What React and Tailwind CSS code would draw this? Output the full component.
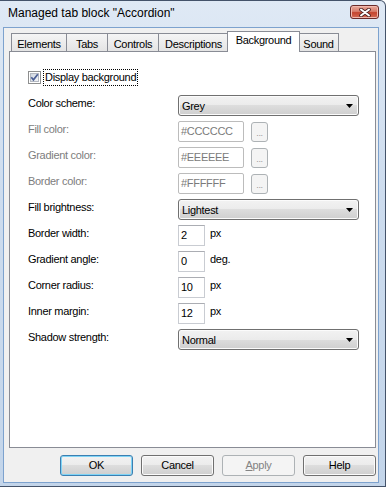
import React from "react";

const BTN_BG =
  "bg-[linear-gradient(#f2f2f2_0%,#ebebeb_50%,#dddddd_50%,#cfcfcf_100%)]";

function Combo({ value }) {
  return (
    <div className="flex h-[21px] w-[181px] items-center rounded-[3px] border border-[#707070] bg-[linear-gradient(#f2f2f2_0%,#ebebeb_50%,#dddddd_50%,#cfcfcf_100%)] pl-[3px] shadow-[inset_0_0_0_1px_#fbfbfb]">
      <span className="flex-1 pt-[1px] leading-[13px]">{value}</span>
      <svg width="7" height="4" className="mr-[5px]">
        <path d="M0 0h7L3.5 4z" fill="#000" />
      </svg>
    </div>
  );
}

function Label({ children, disabled }) {
  return (
    <div
      className={
        disabled
          ? "mt-[2px] w-[150px] leading-[13px] text-[#7d7d7d]"
          : "mt-[2px] w-[150px] leading-[13px] text-black"
      }
    >
      {children}
    </div>
  );
}

function ColorRow({ label, value }) {
  return (
    <div className="flex h-[21px] items-start">
      <Label disabled>{label}</Label>
      <div className="flex h-[21px] w-[66px] items-center rounded-[2px] border border-[#bcbcbc] bg-white pl-[2px] leading-[13px] text-[#7a7a7a]">
        {value}
      </div>
      <div className="ml-[7px] mt-[1px] flex h-[20px] w-[17px] items-end justify-center rounded-[3px] border border-[#adb2b5] bg-[#f4f4f4] pb-[3px] text-[9px] leading-[9px] text-[#9a9a9a]">
        ...
      </div>
    </div>
  );
}

function NumRow({ label, value, unit }) {
  return (
    <div className="flex h-[21px] items-start">
      <Label>{label}</Label>
      <div className="flex h-[21px] w-[27px] items-center border border-[#c9ccd2] border-t-[#abadb3] bg-white pl-[2px] leading-[13px] text-black">
        {value}
      </div>
      <div className="ml-[5px] mt-[2px] leading-[13px]">{unit}</div>
    </div>
  );
}

function ComboRow({ label, value }) {
  return (
    <div className="flex h-[21px] items-start">
      <Label>{label}</Label>
      <Combo value={value} />
    </div>
  );
}

export default function App() {
  return (
    <div className="h-[487px] w-[386px] overflow-hidden bg-white font-['Liberation_Sans',Arial,sans-serif] text-[11px] tracking-[-0.3px] text-black">
      <div className="flex h-[487px] w-[386px] flex-col rounded-tr-[6px] border-y border-r border-[#44536a] bg-[linear-gradient(#dfe9f5_0%,#cddcee_40%,#c3d5ea_100%)]">
        {/* Title bar */}
        <div className="flex h-[26px] items-start">
          <div className="flex-1 pl-[8px] pt-[5px] text-[12px] leading-[15px] tracking-normal text-black">
            Managed tab block "Accordion"
          </div>
          <div className="mr-[6px] mt-[4px] flex h-[14px] w-[29px] items-center justify-center rounded-[3px] border border-[#6a2b2a] bg-[linear-gradient(#e9a99b_0%,#d77d6c_45%,#c4452f_55%,#d56a55_100%)] shadow-[inset_0_0_0_1px_#f0b9ae]">
            <svg width="12" height="9" viewBox="0 0 12 9">
              <path
                d="M2 1.5L10 7.5M10 1.5L2 7.5"
                stroke="#4a2020"
                strokeWidth="3.6"
                strokeLinecap="round"
              />
              <path
                d="M2 1.5L10 7.5M10 1.5L2 7.5"
                stroke="#ffffff"
                strokeWidth="2"
                strokeLinecap="round"
              />
            </svg>
          </div>
        </div>

        {/* Client area */}
        <div className="mb-[3px] ml-[3px] mr-[6px] flex flex-1 flex-col border border-[#7da2ce] bg-[#f0f0f0]">
          <div className="flex flex-1 flex-col pt-[3px]">
            {/* Tab strip */}
            <div className="ml-[5px] flex h-[20px] w-[367px] items-end pl-[2px]">
              <div className="flex h-[18px] w-[56px] justify-center border-x border-t border-[#898c95] bg-[linear-gradient(#f5f5f5,#e4e4e4)] pt-[4px] leading-[13px]">
                Elements
              </div>
              <div className="-ml-px flex h-[18px] w-[42px] justify-center border-x border-t border-[#898c95] bg-[linear-gradient(#f5f5f5,#e4e4e4)] pt-[4px] leading-[13px]">
                Tabs
              </div>
              <div className="-ml-px flex h-[18px] w-[52px] justify-center border-x border-t border-[#898c95] bg-[linear-gradient(#f5f5f5,#e4e4e4)] pt-[4px] leading-[13px]">
                Controls
              </div>
              <div className="-ml-px flex h-[18px] w-[71px] justify-center border-x border-t border-[#898c95] bg-[linear-gradient(#f5f5f5,#e4e4e4)] pt-[4px] leading-[13px]">
                Descriptions
              </div>
              <div className="relative z-10 -mb-px -ml-[2px] flex h-[21px] w-[73px] justify-center border-x border-t border-[#898c95] bg-white pt-[2px] leading-[13px]">
                Background
              </div>
              <div className="-ml-[2px] flex h-[18px] w-[41px] justify-center border-x border-t border-[#898c95] bg-[linear-gradient(#f5f5f5,#e4e4e4)] pt-[4px] leading-[13px]">
                Sound
              </div>
            </div>

            {/* Panel */}
            <div className="ml-[5px] flex h-[397px] w-[367px] flex-col border border-[#898c95] bg-white pl-[18px] pt-[17px]">
              <div className="flex h-[17px] items-center">
                <div className="flex h-[13px] w-[13px] items-center justify-center border border-[#8e8f8f] bg-white">
                  <div className="flex h-[9px] w-[9px] items-center justify-center border border-[#b3b8c1] bg-[linear-gradient(135deg,#cfd6df,#f2f4f7)]">
                    <svg width="9" height="9" viewBox="0 0 9 9" className="shrink-0">
                      <path
                        d="M1.3 4.3L3.4 6.8L7.8 1.2"
                        stroke="#4a5e95"
                        strokeWidth="1.7"
                        fill="none"
                      />
                    </svg>
                  </div>
                </div>
                <div className="ml-[2px] flex h-[17px] items-center border border-dotted border-black px-[1px] leading-[13px]">
                  Display background
                </div>
              </div>

              <div className="mt-[9px] flex flex-col gap-[5px]">
                <ComboRow label="Color scheme:" value="Grey" />
                <ColorRow label="Fill color:" value="#CCCCCC" />
                <ColorRow label="Gradient color:" value="#EEEEEE" />
                <ColorRow label="Border color:" value="#FFFFFF" />
                <ComboRow label="Fill brightness:" value="Lightest" />
                <NumRow label="Border width:" value="2" unit="px" />
                <NumRow label="Gradient angle:" value="0" unit="deg." />
                <NumRow label="Corner radius:" value="10" unit="px" />
                <NumRow label="Inner margin:" value="12" unit="px" />
                <ComboRow label="Shadow strength:" value="Normal" />
              </div>
            </div>

            {/* Buttons */}
            <div className="ml-[56px] mt-[7px] flex gap-[8px]">
              <div className={"flex h-[21px] w-[73px] items-center justify-center rounded-[3px] border border-[#3c7fb1] shadow-[inset_0_0_0_1px_#7fd4f6] " + BTN_BG}>
                OK
              </div>
              <div className={"flex h-[21px] w-[73px] items-center justify-center rounded-[3px] border border-[#707070] shadow-[inset_0_0_0_1px_#fbfbfb] " + BTN_BG}>
                Cancel
              </div>
              <div className="flex h-[21px] w-[73px] items-center justify-center rounded-[3px] border border-[#adb2b5] bg-[#f4f4f4] text-[#838383]">
                <span className="underline">A</span>pply
              </div>
              <div className={"flex h-[21px] w-[73px] items-center justify-center rounded-[3px] border border-[#707070] shadow-[inset_0_0_0_1px_#fbfbfb] " + BTN_BG}>
                Help
              </div>
            </div>
          </div>
        </div>
      </div>
    </div>
  );
}
